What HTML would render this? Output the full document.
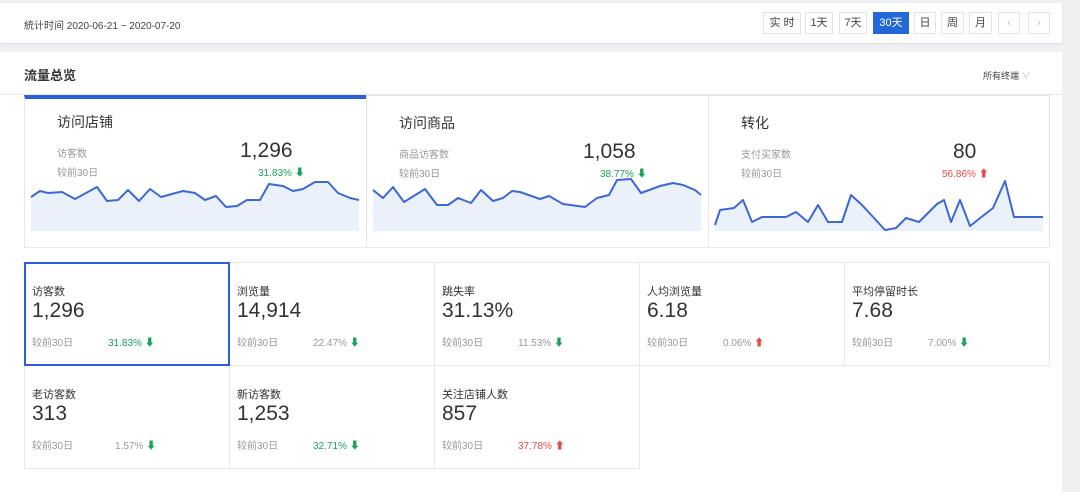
<!DOCTYPE html>
<html><head><meta charset="utf-8"><style>
*{margin:0;padding:0;box-sizing:border-box}
body{width:1080px;height:481px;background:#eef0f3;font-family:"Liberation Sans","Noto Sans CJK SC",sans-serif;position:relative;overflow:hidden;color:#333}
.a{position:absolute}
.top{left:0;top:3px;width:1062px;height:40px;background:#fff;box-shadow:0 1px 3px rgba(0,0,0,.08)}
.main{left:0;top:52px;width:1062px;height:440px;background:#fff}
.btn{position:absolute;top:12px;height:22px;border:1px solid #e3e3e3;font-size:11px;line-height:20px;text-align:center;color:#444;background:#fff}
.btn.on{background:#2468d8;color:#fff;border-color:#2468d8}
.card{position:absolute;top:95px;height:153px;border:1px solid #e8e8e8;background:#fff}
.ct{position:absolute;left:32px;top:17px;font-size:14px;color:#333}
.cl{position:absolute;left:32px;font-size:10px;color:#999}
.cv{position:absolute;font-size:21px;color:#333}
.cp{position:absolute;font-size:10px}
.g{color:#1aa25a}.r{color:#e84a4a}
.cell{position:absolute;width:206px;height:104px;border:1px solid #e8e8e8;background:#fff}
.cell .l{position:absolute;left:7px;top:20px;font-size:11px;color:#333}
.cell .v{position:absolute;left:7px;top:36px;font-size:21px;color:#333}
.cell .c{position:absolute;left:7px;top:71px;font-size:10px;color:#999}
.cell .p{position:absolute;left:83px;top:71px;font-size:10px;color:#999}
.cell .p.g{color:#1aa25a}.cell .p.r{color:#e84a4a}
b.g{color:#1aa25a}b.r{color:#e84a4a}
</style></head><body>
<div class="a top"></div>
<div class="a" style="left:24px;top:17px;font-size:10px;color:#444">統计时间 2020-06-21 ~ 2020-07-20</div>
<div class="btn" style="left:763px;width:38px">实 时</div>
<div class="btn" style="left:805px;width:28px">1天</div>
<div class="btn" style="left:839px;width:28px">7天</div>
<div class="btn on" style="left:873px;width:36px">30天</div>
<div class="btn" style="left:914px;width:22px">日</div>
<div class="btn" style="left:941px;width:23px">周</div>
<div class="btn" style="left:969px;width:23px">月</div>
<div class="btn" style="left:998px;width:22px;color:#bbb">‹</div>
<div class="btn" style="left:1028px;width:22px;color:#bbb">›</div>
<div class="a main"></div>
<div class="a" style="left:24px;top:65px;font-size:13px;font-weight:bold;color:#333">流量总览</div>
<div class="a" style="left:983px;top:69px;font-size:9px;color:#444">所有终端 <span style="color:#bbb">∨</span></div>
<div class="a" style="left:0;top:94px;width:1062px;height:1px;background:#e8e8e8"></div>

<div class="card" style="left:24px;width:343px;border-top:4px solid #2b5fd6">
<div class="ct" style="top:13px">访问店铺</div>
<div class="cl" style="top:46px">访客数</div><div class="cl" style="top:65px">较前30日</div>
<div class="cv" style="left:215px;top:40px">1,296</div>
<div class="cp g" style="left:233px;top:65px">31.83% <b>⬇</b></div>
</div>
<div class="card" style="left:366px;width:343px">
<div class="ct">访问商品</div>
<div class="cl" style="top:50px">商品访客数</div><div class="cl" style="top:69px">较前30日</div>
<div class="cv" style="left:216px;top:44px">1,058</div>
<div class="cp g" style="left:233px;top:69px">38.77% <b>⬇</b></div>
</div>
<div class="card" style="left:708px;width:342px">
<div class="ct">转化</div>
<div class="cl" style="top:50px">支付买家数</div><div class="cl" style="top:69px">较前30日</div>
<div class="cv" style="left:244px;top:44px">80</div>
<div class="cp r" style="left:233px;top:69px">56.86% <b>⬆</b></div>
</div>
<svg class="a" style="left:0;top:0" width="1080" height="481">
<g fill="#ebf1fb" stroke="none">
<polygon points="31,197 40,191 48,193 62,192 75,199 97,187 107,201 118,200 128,190 139,201 150,189 161,197 183,191 195,193 205,200 216,196 226,207 237,206 247,200 260,200 269,184 283,186 293,191 303,189 315,182 328,182 338,193 350,198 359,200 359,231 31,231"/>
<polygon points="373,190 383,198 393,187 404,202 425,189 437,205 448,205 458,198 471,203 481,190 493,201 503,198 512,191 520,192 540,199 549,196 563,204 585,207 597,198 609,195 617,180 631,179 641,193 660,186 673,183 683,185 695,190 701,195 701,231 373,231"/>
<polygon points="715,225 720,210 734,208 743,200 752,222 762,217 786,217 796,212 808,222 818,205 828,222 842,222 851,195 862,205 885,230 896,228 906,218 919,222 937,204 944,200 951,222 960,200 970,226 984,215 993,208 1005,181 1014,217 1043,217 1043,231 715,231"/>
</g>
<g fill="none" stroke="#3b68d6" stroke-width="2" stroke-linejoin="round">
<polyline points="31,197 40,191 48,193 62,192 75,199 97,187 107,201 118,200 128,190 139,201 150,189 161,197 183,191 195,193 205,200 216,196 226,207 237,206 247,200 260,200 269,184 283,186 293,191 303,189 315,182 328,182 338,193 350,198 359,200"/>
<polyline points="373,190 383,198 393,187 404,202 425,189 437,205 448,205 458,198 471,203 481,190 493,201 503,198 512,191 520,192 540,199 549,196 563,204 585,207 597,198 609,195 617,180 631,179 641,193 660,186 673,183 683,185 695,190 701,195"/>
<polyline points="715,225 720,210 734,208 743,200 752,222 762,217 786,217 796,212 808,222 818,205 828,222 842,222 851,195 862,205 885,230 896,228 906,218 919,222 937,204 944,200 951,222 960,200 970,226 984,215 993,208 1005,181 1014,217 1043,217"/>
</g></svg>

<div class="cell" style="left:229px;top:262px"><div class="l">浏览量</div><div class="v">14,914</div><div class="c">较前30日</div><div class="p">22.47% <b class="g">⬇</b></div></div>
<div class="cell" style="left:434px;top:262px"><div class="l">跳失率</div><div class="v">31.13%</div><div class="c">较前30日</div><div class="p">11.53% <b class="g">⬇</b></div></div>
<div class="cell" style="left:639px;top:262px"><div class="l">人均浏览量</div><div class="v">6.18</div><div class="c">较前30日</div><div class="p">0.06% <b class="r">⬆</b></div></div>
<div class="cell" style="left:844px;top:262px"><div class="l">平均停留时长</div><div class="v">7.68</div><div class="c">较前30日</div><div class="p">7.00% <b class="g">⬇</b></div></div>
<div class="cell" style="left:24px;top:365px"><div class="l">老访客数</div><div class="v">313</div><div class="c">较前30日</div><div class="p" style="left:90px">1.57% <b class="g">⬇</b></div></div>
<div class="cell" style="left:229px;top:365px"><div class="l">新访客数</div><div class="v">1,253</div><div class="c">较前30日</div><div class="p g">32.71% <b>⬇</b></div></div>
<div class="cell" style="left:434px;top:365px"><div class="l">关注店铺人数</div><div class="v">857</div><div class="c">较前30日</div><div class="p r">37.78% <b>⬆</b></div></div>
<div class="cell" style="left:24px;top:262px;border:2px solid #2b5fd6"><div class="l" style="left:6px;top:19px">访客数</div><div class="v" style="left:6px;top:35px">1,296</div><div class="c" style="left:6px;top:70px">较前30日</div><div class="p g" style="left:82px;top:70px">31.83% <b>⬇</b></div></div>
</body></html>
